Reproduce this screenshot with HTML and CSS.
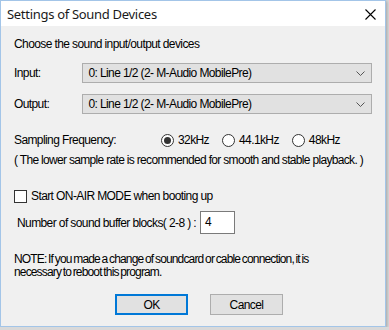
FILE: index.html
```html
<!DOCTYPE html>
<html lang="en">
<head>
    <meta charset="UTF-8">
    <title>Settings of Sound Devices</title>
    <link rel="stylesheet" href="styles.css">
</head>
<body>
    <div class="window">
        <div class="titlebar">
            <span class="title">Settings of Sound Devices</span>
            <svg class="close" width="11" height="11" viewBox="0 0 11 11">
                <path d="M0.5 0.5 L10.5 10.5 M10.5 0.5 L0.5 10.5" stroke="#000" stroke-width="1.1" fill="none"/>
            </svg>
        </div>

        <div class="content">
            <div class="intro">Choose the sound input/output devices</div>

            <div class="field-row">
                <span class="field-label">Input:</span>
                <div class="select">
                    <span>0: Line 1/2 (2- M-Audio MobilePre)</span>
                    <svg class="chevron" width="9" height="5" viewBox="0 0 9 5"><path d="M0.5 0.5 L4.5 4.5 L8.5 0.5" stroke="#555" fill="none"/></svg>
                </div>
            </div>

            <div class="field-row second">
                <span class="field-label">Output:</span>
                <div class="select">
                    <span>0: Line 1/2 (2- M-Audio MobilePre)</span>
                    <svg class="chevron" width="9" height="5" viewBox="0 0 9 5"><path d="M0.5 0.5 L4.5 4.5 L8.5 0.5" stroke="#555" fill="none"/></svg>
                </div>
            </div>

            <div class="freq-row">
                <span class="freq-label">Sampling Frequency:</span>
                <label class="radio checked"><span class="dot"></span>32kHz</label>
                <label class="radio"><span class="dot"></span>44.1kHz</label>
                <label class="radio"><span class="dot"></span>48kHz</label>
            </div>
            <div class="hint">( The lower sample rate is recommended for smooth and stable playback. )</div>

            <label class="check-row"><span class="box"></span>Start ON-AIR MODE when booting up</label>

            <div class="buffer-row">
                <span>Number of sound buffer blocks( 2-8 ) :</span>
                <div class="num-box">4</div>
            </div>

            <div class="note">NOTE: If you made a change of soundcard or cable connection, it is<br>necessary to reboot this program.</div>

            <div class="buttons">
                <button class="btn default">OK</button>
                <button class="btn">Cancel</button>
            </div>
        </div>
    </div>
</body>
</html>
```

FILE: styles.css
```css
body {
    margin: 0;
    padding: 0;
    background-color: #d9d9d9;
    font-family: "Liberation Sans", Arial, sans-serif;
    font-size: 12px;
    color: #000;
}
.window {
    width: 386px;
    height: 327px;
    box-sizing: border-box;
    border: 1px solid #a3c5e8;
    background-color: #f0f0f0;
    box-shadow: 1px 1px 3px rgba(0,0,0,0.25);
}
.titlebar {
    height: 25px;
    background-color: #fff;
    display: flex;
    align-items: center;
    justify-content: space-between;
    padding: 0 9px 0 6px;
}
.title {
    font-family: "Noto Sans", "Open Sans", sans-serif;
    font-size: 13px;
    letter-spacing: -0.3px;
    color: #1a1a1a;
}
.close {
    margin-top: 1px;
}
.content {
    padding: 0 13px;
    line-height: 14px;
    letter-spacing: -0.6px;
    white-space: nowrap;
}
.intro {
    margin-top: 11px;
}
.field-row {
    display: flex;
    align-items: center;
    margin-top: 12px;
    height: 20px;
}
.field-row.second {
    margin-top: 11px;
}
.field-label {
    width: 69px;
}
.select {
    width: 292px;
    height: 20px;
    box-sizing: border-box;
    border: 1px solid #adadad;
    background-color: #e1e1e1;
    display: flex;
    align-items: center;
    justify-content: space-between;
    padding: 0 6px 0 5px;
}
.freq-row {
    display: flex;
    align-items: center;
    margin-top: 19px;
}
.freq-label {
    width: 147px;
}
.radio {
    display: flex;
    align-items: center;
    gap: 4px;
    margin-right: 13px;
}
.radio .dot {
    width: 13px;
    height: 13px;
    box-sizing: border-box;
    border: 1px solid #333;
    border-radius: 50%;
    background-color: #fff;
    display: flex;
    align-items: center;
    justify-content: center;
}
.radio.checked .dot::after {
    content: "";
    width: 7px;
    height: 7px;
    border-radius: 50%;
    background-color: #333;
}
.hint {
    margin-top: 6px;
    letter-spacing: -0.68px;
}
.check-row {
    display: flex;
    align-items: center;
    gap: 4px;
    margin-top: 22px;
}
.check-row .box {
    width: 13px;
    height: 13px;
    box-sizing: border-box;
    border: 1px solid #333;
    background-color: #fff;
}
.buffer-row {
    display: flex;
    align-items: center;
    gap: 4px;
    margin-top: 8px;
    padding-left: 3px;
}
.num-box {
    width: 35px;
    height: 23px;
    box-sizing: border-box;
    border: 1px solid #7a7a7a;
    background-color: #fff;
    padding: 3px 0 0 4px;
}
.note {
    margin-top: 19px;
    line-height: 13px;
    letter-spacing: -0.85px;
    word-spacing: -0.8px;
}
.buttons {
    display: flex;
    gap: 22px;
    margin-top: 15px;
    padding-left: 101px;
}
.btn {
    width: 73px;
    height: 21px;
    box-sizing: border-box;
    border: 1px solid #adadad;
    background-color: #e1e1e1;
    font-family: "Liberation Sans", Arial, sans-serif;
    font-size: 12px;
    letter-spacing: -0.6px;
    color: #000;
    padding: 0;
}
.btn.default {
    border: 2px solid #0078d7;
}
```
